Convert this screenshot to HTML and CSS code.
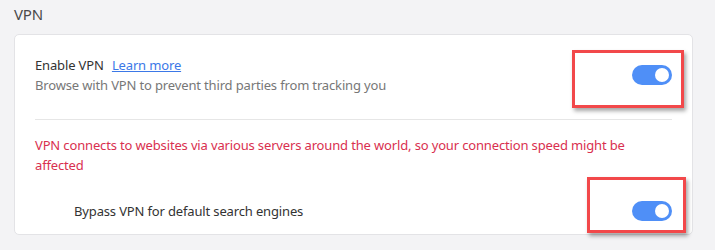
FILE: index.html
```html
<!DOCTYPE html>
<html lang="en">
<head>
    <meta charset="UTF-8">
    <title>VPN settings</title>
    <link rel="stylesheet" href="styles.css">
</head>
<body>

<div class="page">
    <h2 class="section-title">VPN</h2>

    <div class="card">
        <div class="row">
            <div class="row-text">
                <div class="row-label">Enable VPN <a href="#" class="link">Learn more</a></div>
                <div class="row-desc">Browse with VPN to prevent third parties from tracking you</div>
            </div>
            <span class="toggle on"><span class="knob"></span></span>
        </div>

        <div class="divider"></div>

        <p class="warning">VPN connects to websites via various servers around the world, so your connection speed might be affected</p>

        <div class="row sub-row">
            <div class="row-label">Bypass VPN for default search engines</div>
            <span class="toggle on"><span class="knob"></span></span>
        </div>
    </div>

    <!-- annotation boxes -->
    <div class="mark mark-1"></div>
    <div class="mark mark-2"></div>
</div>

</body>
</html>
```

FILE: styles.css
```css
body {
    margin: 0;
    padding: 0;
    background-color: #f3f3f5;
    font-family: "Noto Sans", "Open Sans", sans-serif;
    font-size: 13px;
    letter-spacing: -0.15px;
    color: #333;
}

.page {
    position: relative;
    width: 715px;
    height: 250px;
    padding: 0 22px 0 14px;
    box-sizing: border-box;
}

.section-title {
    margin: 0;
    padding: 3px 0 9px 0;
    font-size: 15px;
    font-weight: normal;
    color: #4a4a4a;
    line-height: 22px;
}

.card {
    background-color: #fff;
    border: 1px solid #e3e3e6;
    border-radius: 5px;
    padding: 0 20px 13px 20px;
}

.row {
    display: flex;
    align-items: center;
    justify-content: space-between;
    padding: 20px 0 24px 0;
}

.row-label {
    line-height: 20px;
    color: #333;
}

.row-desc {
    line-height: 20px;
    color: #777;
}

.link {
    color: #3b78e7;
    margin-left: 5px;
}

.divider {
    height: 1px;
    background-color: #e6e6e6;
}

.warning {
    margin: 0;
    padding-top: 15px;
    line-height: 20px;
    color: #d9304f;
}

.sub-row {
    padding: 26px 0 0 39px;
}

.toggle {
    display: flex;
    align-items: center;
    justify-content: flex-end;
    width: 40px;
    height: 20px;
    border-radius: 10px;
    background-color: #4f8ff7;
    padding: 0 3px;
    box-sizing: border-box;
}

.knob {
    width: 14px;
    height: 14px;
    border-radius: 50%;
    background-color: #fff;
}

.mark {
    position: absolute;
    border: 3px solid #f2484a;
    box-shadow: 2px 3px 4px rgba(0, 0, 0, 0.35);
    box-sizing: border-box;
}

.mark-1 {
    left: 572px;
    top: 50px;
    width: 112px;
    height: 58px;
}

.mark-2 {
    left: 587px;
    top: 177px;
    width: 99px;
    height: 56px;
}
```
